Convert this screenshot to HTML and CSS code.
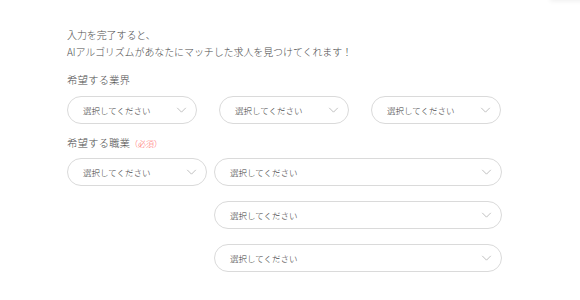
FILE: index.html
```html
<!DOCTYPE html>
<html lang="ja">
<head>
<meta charset="utf-8">
<link rel="stylesheet" href="styles.css">
</head>
<body>
<div class="corner"></div>
<main class="form">
  <p class="intro">入力を完了すると、<br>AIアルゴリズムがあなたにマッチした求人を見つけてくれます！</p>

  <div class="label label-first">希望する業界</div>
  <div class="row-industry">
    <div class="select"><span>選択してください</span><svg class="chev" viewBox="0 0 12 7"><path d="M1 1 L6 6 L11 1"/></svg></div>
    <div class="select"><span>選択してください</span><svg class="chev" viewBox="0 0 12 7"><path d="M1 1 L6 6 L11 1"/></svg></div>
    <div class="select"><span>選択してください</span><svg class="chev" viewBox="0 0 12 7"><path d="M1 1 L6 6 L11 1"/></svg></div>
  </div>

  <div class="label label-second">希望する職業<span class="req">（必須）</span></div>
  <div class="grid-job">
    <div class="select"><span>選択してください</span><svg class="chev" viewBox="0 0 12 7"><path d="M1 1 L6 6 L11 1"/></svg></div>
    <div class="select"><span>選択してください</span><svg class="chev" viewBox="0 0 12 7"><path d="M1 1 L6 6 L11 1"/></svg></div>
    <div class="select col2"><span>選択してください</span><svg class="chev" viewBox="0 0 12 7"><path d="M1 1 L6 6 L11 1"/></svg></div>
    <div class="select col2"><span>選択してください</span><svg class="chev" viewBox="0 0 12 7"><path d="M1 1 L6 6 L11 1"/></svg></div>
  </div>
</main>
</body>
</html>
```

FILE: styles.css
```css
html, body {
  margin: 0;
  padding: 0;
  background: #ffffff;
}
body {
  font-family: "Noto Sans CJK JP", "Noto Sans", sans-serif;
  font-weight: 300;
  color: #4d4d4d;
  width: 580px;
  height: 300px;
  overflow: hidden;
  position: relative;
}
.corner {
  position: absolute;
  top: -6px;
  right: -10px;
  width: 40px;
  height: 6px;
  box-shadow: 0 1px 5px rgba(0,0,0,0.07);
}
.form {
  padding: 26px 0 0 67px;
}
.intro {
  margin: 0;
  font-size: 10px;
  line-height: 17px;
  letter-spacing: -0.1px;
}
.label {
  font-size: 10.5px;
  line-height: 14px;
}
.label-first {
  margin-top: 13px;
}
.label-second {
  margin-top: 12px;
}
.req {
  color: #ff5c5c;
  font-size: 8px;
}
.row-industry {
  display: flex;
  gap: 22px;
  margin-top: 9px;
}
.row-industry .select {
  width: 130px;
}
.grid-job {
  display: grid;
  grid-template-columns: 140px 288px;
  column-gap: 7px;
  row-gap: 15px;
  margin-top: 7px;
}
.col2 {
  grid-column: 2;
}
.select {
  box-sizing: border-box;
  height: 28px;
  border: 1px solid #dadada;
  border-radius: 14px;
  display: flex;
  align-items: center;
  justify-content: space-between;
  padding: 0 9px 0 15px;
  font-size: 8.5px;
  color: #3a3a3a;
  background: #ffffff;
}
.chev {
  width: 11px;
  height: 6px;
  fill: none;
  stroke: #b5b5b5;
  stroke-width: 1;
}
```
